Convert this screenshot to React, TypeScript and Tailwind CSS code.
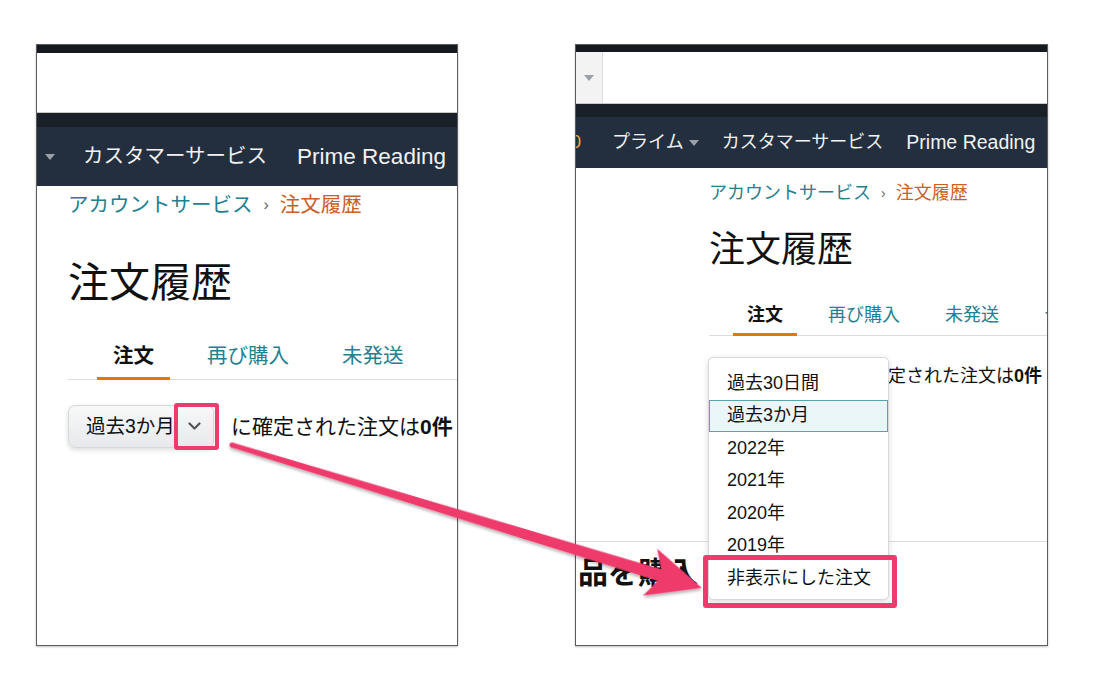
import React from 'react'

const PINK = '#ee3a6c'

function Caret({ className }: { className?: string }) {
  return (
    <svg className={className} viewBox="0 0 10 6" width="10" height="6">
      <polygon points="0,0 10,0 5,6" fill="#9aa0a6" />
    </svg>
  )
}

function Chevron() {
  return (
    <svg className="ml-[13px]" viewBox="0 0 13 9" width="13" height="9">
      <polyline points="1.5,1.5 6.5,6.5 11.5,1.5" fill="none" stroke="#555" strokeWidth="2.2" strokeLinecap="round" strokeLinejoin="round" />
    </svg>
  )
}

function LeftPanel() {
  return (
    <div className="w-[422px] h-[602px] shrink-0 border border-[#5c5c5c] bg-white overflow-hidden flex flex-col shadow-[0_1px_2px_rgba(0,0,0,0.25)]">
      <div className="h-[8px] bg-[#16191f]" />
      <div className="h-[60px] bg-white border-b border-[#c8c8c8]" />
      <div className="h-[14px] bg-[#1a2028]" />
      <div className="h-[59px] shrink-0 bg-[#232f3e] flex items-center whitespace-nowrap text-[#f2f2f2]">
        <Caret className="ml-[8px] shrink-0" />
        <span className="ml-[28px] text-[20.5px]">カスタマーサービス</span>
        <span className="ml-[30px] text-[22.5px]">Prime Reading</span>
      </div>
      <div className="pl-[31px] whitespace-nowrap">
        <div className="mt-[5px] h-[28px] flex items-center text-[20.5px]">
          <span className="text-[#23808f]">アカウントサービス</span>
          <span className="mx-[11px] text-[#666] text-[16px]">›</span>
          <span className="text-[#c8602a]">注文履歴</span>
        </div>
        <h1 className="mt-[40px] h-[48px] leading-[48px] text-[41px] text-[#111]">注文履歴</h1>
        <div className="mt-[35px] flex gap-[21px] pl-[29px] border-b border-[#dcdcdc] text-[20.5px]">
          <div className="px-[16px] pb-[7px] leading-[28px] border-b-[3px] border-[#e77600] -mb-px font-bold text-[#111]">注文</div>
          <div className="px-[16px] pb-[7px] leading-[28px] border-b-[3px] border-transparent -mb-px text-[#23808f]">再び購入</div>
          <div className="px-[16px] pb-[7px] leading-[28px] border-b-[3px] border-transparent -mb-px text-[#23808f]">未発送</div>
          <div className="px-[16px] pb-[7px] leading-[28px] border-b-[3px] border-transparent -mb-px text-[#23808f]">デジタル注文</div>
        </div>
        <div className="relative mt-[25px] flex items-center">
          <div className="h-[43px] w-[146px] shrink-0 rounded-[7px] border border-[#d5d9d9] bg-linear-to-b from-[#f7f8f8] to-[#e7e9ec] shadow-[0_2px_5px_rgba(15,17,17,0.15)] flex items-center pl-[17px] text-[19.5px] text-[#0f1111]">
            過去3か月
            <Chevron />
          </div>
          <span className="ml-[17px] text-[21px] text-[#0f1111]">
            に確定された注文は<b>0件</b>
          </span>
          <div className="absolute left-[106px] top-[-2px] w-[45px] h-[47px] border-[4px] border-[#ee3a6c] rounded-[3px]" />
        </div>
      </div>
    </div>
  )
}

const OPTIONS = ['過去30日間', '過去3か月', '2022年', '2021年', '2020年', '2019年', '非表示にした注文']

function RightPanel() {
  return (
    <div className="w-[473px] h-[602px] shrink-0 border border-[#5c5c5c] bg-white overflow-hidden flex flex-col shadow-[0_1px_2px_rgba(0,0,0,0.25)]">
      <div className="h-[7px] bg-[#16191f]" />
      <div className="h-[52px] flex bg-white border-b border-[#c8c8c8]">
        <div className="w-[27px] bg-[#f3f3f3] border-r border-[#dddddd] flex items-center justify-center">
          <Caret />
        </div>
      </div>
      <div className="h-[13px] bg-[#1a2028]" />
      <div className="h-[51px] shrink-0 bg-[#232f3e] flex items-center whitespace-nowrap text-[#f2f2f2] text-[18px]">
        <span className="-ml-[5px] text-[#f3a847]">0</span>
        <span className="ml-[31px]">プライム</span>
        <Caret className="ml-[5px] shrink-0" />
        <span className="ml-[23px]">カスタマーサービス</span>
        <span className="ml-[23px] text-[19.5px]">Prime Reading</span>
      </div>
      <div className="pl-[133px] whitespace-nowrap">
        <div className="mt-[13px] h-[24px] flex items-center text-[18px]">
          <span className="text-[#23808f]">アカウントサービス</span>
          <span className="mx-[10px] text-[#666] text-[14px]">›</span>
          <span className="text-[#c8602a]">注文履歴</span>
        </div>
        <h1 className="mt-[23px] h-[44px] leading-[44px] text-[36px] text-[#111]">注文履歴</h1>
        <div className="mt-[31px] flex gap-[17px] pl-[24px] border-b border-[#dcdcdc] text-[18px]">
          <div className="px-[14px] pb-[6px] leading-[24px] border-b-[3px] border-[#e77600] -mb-px font-bold text-[#111]">注文</div>
          <div className="px-[14px] pb-[6px] leading-[24px] border-b-[3px] border-transparent -mb-px text-[#23808f]">再び購入</div>
          <div className="px-[14px] pb-[6px] leading-[24px] border-b-[3px] border-transparent -mb-px text-[#23808f]">未発送</div>
          <div className="px-[14px] pb-[6px] leading-[24px] border-b-[3px] border-transparent -mb-px text-[#23808f]">デジタル注文</div>
        </div>
        <div className="relative mt-[22px] flex items-center">
          <div className="h-[37px] w-[127px] shrink-0 rounded-[6px] border border-[#d5d9d9] bg-linear-to-b from-[#f7f8f8] to-[#e7e9ec] flex items-center pl-[15px] text-[17px] text-[#0f1111]">
            過去3か月
          </div>
          <span className="ml-[16px] text-[18px] text-[#0f1111]">
            に確定された注文は<b>0件</b>
          </span>
          <div className="absolute left-[-1px] top-[-1px] w-[181px] h-[243px] bg-white border border-[#d5d9d9] rounded-[5px] shadow-[0_2px_6px_rgba(0,0,0,0.15)] pt-[9px] text-[18px] text-[#0f1111]">
            {OPTIONS.map((o, i) => (
              <div
                key={o}
                className={
                  i === 1
                    ? 'h-[32.5px] flex items-center pl-[17px] bg-[#eaf6f8] border border-[#5aa2b0]'
                    : 'h-[32.5px] flex items-center pl-[18px]'
                }
              >
                {o}
              </div>
            ))}
          </div>
          <div className="absolute left-[-6px] top-[197px] w-[194px] h-[53px] border-[5px] border-[#ee3a6c] rounded-[3px]" />
        </div>
      </div>
      <div className="mt-[146px] border-t border-[#dcdcdc] pt-[13px] pl-[2px] whitespace-nowrap">
        <div className="h-[36px] leading-[36px] text-[30px] font-bold text-[#111]">品を購入</div>
      </div>
    </div>
  )
}

export default function App() {
  return (
    <div className="relative w-[1100px] h-[688px] bg-white overflow-hidden font-['Liberation_Sans','Noto_Sans_CJK_JP',sans-serif]">
      <div className="flex pt-[44px] pl-[36px] gap-[117px]">
        <LeftPanel />
        <RightPanel />
      </div>
      <svg className="absolute inset-0 pointer-events-none" width="1100" height="688">
        <defs>
          <filter id="sh" x="-10%" y="-10%" width="120%" height="130%">
            <feDropShadow dx="1" dy="2" stdDeviation="1.5" floodColor="#000" floodOpacity="0.3" />
          </filter>
        </defs>
        <g transform="translate(232 445) rotate(16.92)" filter="url(#sh)">
          <polygon points="0,-2.5 447,-6 437,-24.5 491,0 437,24.5 447,6 0,2.5" fill={PINK} />
          <circle cx="0" cy="0" r="2.5" fill={PINK} />
        </g>
      </svg>
    </div>
  )
}
